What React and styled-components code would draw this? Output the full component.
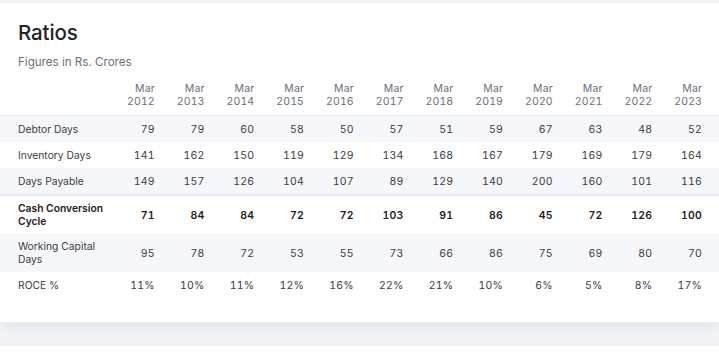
import React from "react";
import styled, { createGlobalStyle } from "styled-components";

const GlobalStyle = createGlobalStyle`
  html, body {
    margin: 0;
    padding: 0;
    background: #f0f2f6;
  }
  body {
    font-family: Inter, "Noto Sans", "Liberation Sans", sans-serif;
    color: #38393d;
  }
`;

const Page = styled.div`
  padding-top: 3px;
  display: flex;
  flex-direction: column;
  gap: 24px;
`;

const Card = styled.section`
  background: #ffffff;
  box-shadow: 0 4px 10px rgba(40, 50, 80, 0.06);
  padding: 17px 0 24px;
`;

const NextCard = styled.div`
  background: #ffffff;
  height: 40px;
`;

const Title = styled.h2`
  margin: 0;
  padding: 0 18px;
  font-size: 20.5px;
  line-height: 26px;
  font-weight: 500;
  color: #222326;
  letter-spacing: -0.1px;
`;

const Subtitle = styled.p`
  margin: 8px 0 0;
  padding: 0 18px;
  font-size: 11.6px;
  line-height: 16px;
  color: #6a6f7a;
`;

const Table = styled.div`
  margin-top: 13px;
  display: flex;
  flex-direction: column;
`;

const Row = styled.div`
  display: grid;
  grid-template-columns: 113px repeat(12, 49.75px) 1fr;
  background: ${(p) => (p.$striped ? "#f6f7fb" : "#ffffff")};
  border-top: ${(p) => (p.$divider ? "2px solid #e3e7f0" : "none")};
  border-bottom: ${(p) => (p.$head ? "1px solid #eceef4" : "none")};
  font-weight: ${(p) => (p.$bold ? 600 : 400)};
  color: ${(p) => (p.$bold ? "#1f2023" : "#3c3d42")};
`;

const Label = styled.div`
  padding: ${(p) => (p.$tight ? "6px" : "6.5px")} 8px ${(p) => (p.$tight ? "6px" : "6.5px")} 18px;
  font-size: 10.3px;
  line-height: 13px;
`;

const Cell = styled.div`
  padding: 6.5px 8px 6.5px 0;
  text-align: right;
  font-size: 10.5px;
  line-height: 13px;
  font-variant-numeric: tabular-nums;
  display: flex;
  align-items: center;
  justify-content: flex-end;
  letter-spacing: 0.2px;
`;

const HeadCell = styled(Cell)`
  color: #6a6f7a;
  line-height: 12.5px;
  padding: 0 8px 7px 0;
  align-items: flex-end;
  letter-spacing: 0.1px;
`;

const years = [2012, 2013, 2014, 2015, 2016, 2017, 2018, 2019, 2020, 2021, 2022, 2023];

const rows = [
  { label: "Debtor Days", values: [79, 79, 60, 58, 50, 57, 51, 59, 67, 63, 48, 52], striped: true },
  { label: "Inventory Days", values: [141, 162, 150, 119, 129, 134, 168, 167, 179, 169, 179, 164] },
  { label: "Days Payable", values: [149, 157, 126, 104, 107, 89, 129, 140, 200, 160, 101, 116], striped: true },
  {
    label: "Cash Conversion Cycle",
    values: [71, 84, 84, 72, 72, 103, 91, 86, 45, 72, 126, 100],
    bold: true,
    divider: true,
    tight: true,
  },
  {
    label: "Working Capital Days",
    values: [95, 78, 72, 53, 55, 73, 66, 86, 75, 69, 80, 70],
    striped: true,
    tight: true,
  },
  {
    label: "ROCE %",
    values: ["11%", "10%", "11%", "12%", "16%", "22%", "21%", "10%", "6%", "5%", "8%", "17%"],
  },
];

export default function App() {
  return (
    <>
      <GlobalStyle />
      <Page>
        <Card>
          <Title>Ratios</Title>
          <Subtitle>Figures in Rs. Crores</Subtitle>
          <Table>
            <Row $head>
              <Label />
              {years.map((y) => (
                <HeadCell key={y}>
                  Mar
                  <br />
                  {y}
                </HeadCell>
              ))}
              <div />
            </Row>
            {rows.map((r) => (
              <Row key={r.label} $striped={r.striped} $bold={r.bold} $divider={r.divider}>
                <Label $tight={r.tight}>{r.label}</Label>
                {r.values.map((v, i) => (
                  <Cell key={i}>{v}</Cell>
                ))}
                <div />
              </Row>
            ))}
          </Table>
        </Card>
        <NextCard />
      </Page>
    </>
  );
}
